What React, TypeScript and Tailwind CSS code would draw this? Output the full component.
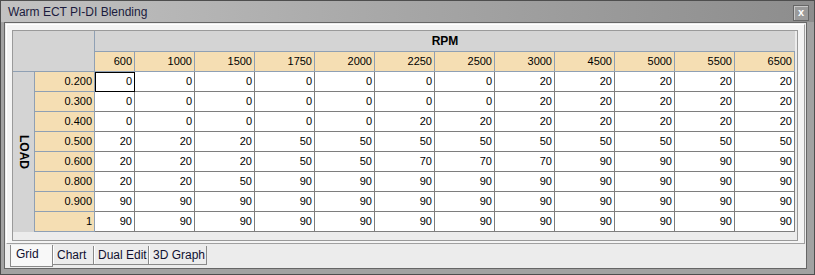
const rpm = ["600", "1000", "1500", "1750", "2000", "2250", "2500", "3000", "4500", "5000", "5500", "6500"];

const rows: [string, number[]][] = [
  ["0.200", [0, 0, 0, 0, 0, 0, 0, 20, 20, 20, 20, 20]],
  ["0.300", [0, 0, 0, 0, 0, 0, 0, 20, 20, 20, 20, 20]],
  ["0.400", [0, 0, 0, 0, 0, 20, 20, 20, 20, 20, 20, 20]],
  ["0.500", [20, 20, 20, 50, 50, 50, 50, 50, 50, 50, 50, 50]],
  ["0.600", [20, 20, 20, 50, 50, 70, 70, 70, 90, 90, 90, 90]],
  ["0.800", [20, 20, 50, 90, 90, 90, 90, 90, 90, 90, 90, 90]],
  ["0.900", [90, 90, 90, 90, 90, 90, 90, 90, 90, 90, 90, 90]],
  ["1", [90, 90, 90, 90, 90, 90, 90, 90, 90, 90, 90, 90]],
];

const tabs: [string, string][] = [
  ["Chart", "w-[41px]"],
  ["Dual Edit", "w-[55px]"],
  ["3D Graph", "w-[58px]"],
];

export default function App() {
  return (
    <div className="flex h-[275px] w-[815px] flex-col border border-[#4e4e4e] bg-[#a2a2a2] font-['Liberation_Sans',Arial,sans-serif] text-black">
      {/* title bar */}
      <div className="flex h-[21px] items-center justify-between bg-gradient-to-r from-[#c2c2c2] via-[#a6a6a6] to-[#8d8d8d] pl-[7px] pr-[5px]">
        <span className="text-[12px] text-[#1b1b3d]">Warm ECT PI-DI Blending</span>
        <button
          type="button"
          className="mt-[3px] flex h-[16px] w-[16px] items-center justify-center border border-[#666] bg-[#9a9a9a] pb-[1px] text-[11px] font-bold leading-none text-white shadow-[inset_1px_1px_0_0_#c8c8c8]"
        >
          x
        </button>
      </div>

      <div className="mb-[5px] ml-[3px] mr-[7px] flex flex-1 flex-col border border-[#666] bg-[#ececec]">
        {/* tab page */}
        <div className="mx-[1px] mt-[1px] border border-b-[#a0a0a0] border-l-white border-r-[#a0a0a0] border-t-white bg-[#f4f4f4] pb-[2px] pl-[5px] pr-[5px] pt-[5px]">
          <div className="h-[211px] w-[786px] border border-[#9a9a9a] bg-[#ececec]">
            <div className="grid grid-cols-[22px_60px_40px_repeat(11,60px)] grid-rows-[21px_20px_repeat(8,20px)] text-[11px] leading-none">
              <div className="col-span-2 row-span-2 border-b border-r border-[#8fa0b4] bg-[#d4d4d4]" />
              <div className="col-span-12 flex items-center justify-center border-b border-[#8fa0b4] bg-[#d4d4d4] text-[12px] font-bold">
                RPM
              </div>
              {rpm.map((r) => (
                <div
                  key={r}
                  className="flex items-center justify-end border-b border-r border-[#8fa0b4] bg-[#f5deb3] pr-[2px]"
                >
                  {r}
                </div>
              ))}
              <div className="row-span-8 flex items-center justify-center border-r border-[#8fa0b4] bg-[#d4d4d4]">
                <span className="rotate-90 text-[12px] font-bold">LOAD</span>
              </div>
              {rows.map(([load, values], ri) => (
                <div key={load} className="contents">
                  <div className="flex items-center justify-end border-b border-r border-[#8fa0b4] bg-[#f5deb3] pr-[2px]">
                    {load}
                  </div>
                  {values.map((v, ci) => (
                    <div
                      key={ci}
                      className={
                        ri === 0 && ci === 0
                          ? "flex items-center justify-end border-b border-r border-black bg-white pr-[2px] shadow-[inset_1px_1px_0_0_#000]"
                          : "flex items-center justify-end border-b border-r border-[#7e7e7e] bg-white pr-[2px]"
                      }
                    >
                      {v}
                    </div>
                  ))}
                </div>
              ))}
            </div>
          </div>
        </div>

        {/* tabs */}
        <div className="flex items-start pl-[5px] pt-[1px] text-[12px] text-[#101030]">
          <div className="flex h-[22px] w-[43px] items-end border-b border-l border-r border-[#8a8a8a] bg-[#f8f8f8] pb-[3px] pl-[5px]">
            Grid
          </div>
          {tabs.map(([t, w]) => (
            <div
              key={t}
              className={`mt-[1px] flex h-[19px] items-center border-b border-r border-[#8a8a8a] bg-[#ececec] pl-[4px] shadow-[inset_1px_0_0_0_#fff] ${w}`}
            >
              {t}
            </div>
          ))}
        </div>
      </div>
    </div>
  );
}
